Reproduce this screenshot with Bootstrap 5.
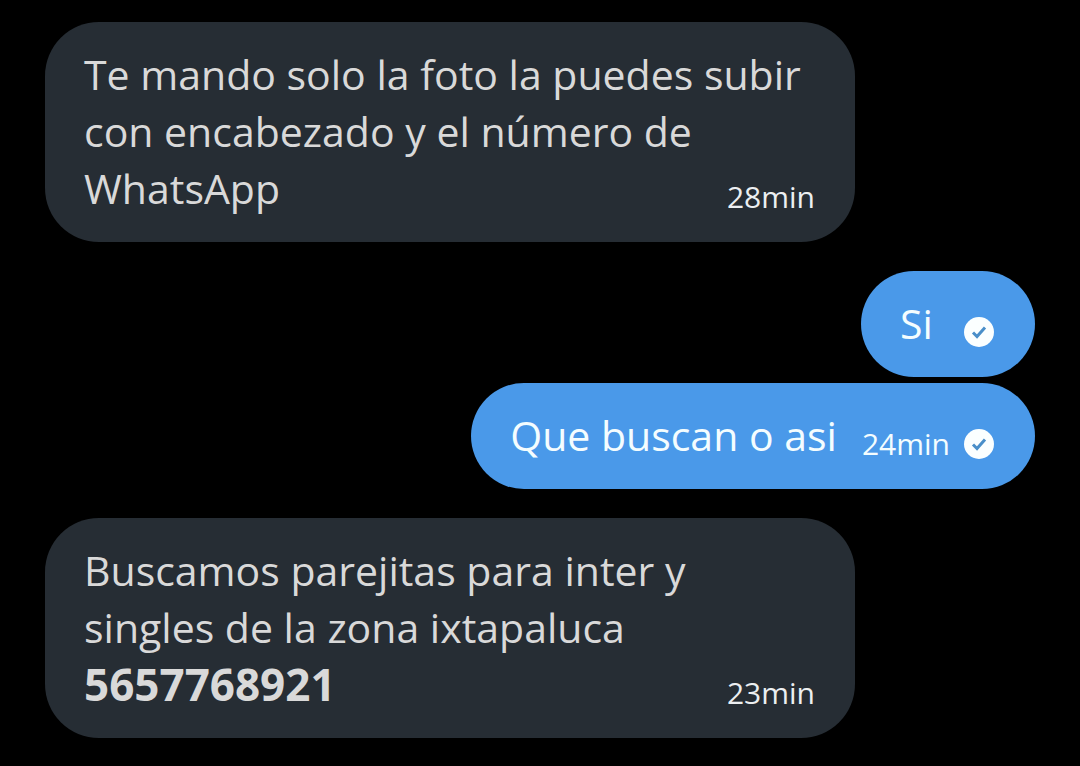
<!DOCTYPE html>
<html lang="es">
<head>
<meta charset="utf-8">
<meta name="viewport" content="width=device-width, initial-scale=1">
<title>Chat</title>
<link href="https://cdn.jsdelivr.net/npm/bootstrap@5.3.0/dist/css/bootstrap.min.css" rel="stylesheet">
<style>
body { background: #000; font-family: "Open Sans", sans-serif; }
.chat { padding: 22px 45px 24px; gap: 29px; }
.sent { gap: 6px; }
.bubble { border-radius: 54px; padding: 24px 40px 25px 39px; font-size: 41px; line-height: 57px; }
.bubble-in { background: #262d34; color: #d9d9d9; max-width: 810px; }
.bubble-out { background: #4a99e9; color: #f4fdff; gap: 25px; min-width: 174px; padding-right: 41px; }
.phone { font-size: 44px; }
.stamp { font-size: 30px; line-height: 40px; min-height: 40px; }
.bubble-in .stamp { color: #eceff1; }
.meta { gap: 14px; }
.tick { width: 30px; height: 30px; }
</style>
</head>
<body>
<main class="chat d-flex flex-column">
  <article class="bubble bubble-in">
    Te mando solo la foto la puedes subir con encabezado y el número de
    <div class="d-flex justify-content-between align-items-end"><span>WhatsApp</span><time class="stamp">28min</time></div>
  </article>
  <section class="sent d-flex flex-column align-items-end">
    <article class="bubble bubble-out d-flex justify-content-between align-items-end">
      <span>Si</span>
      <span class="meta d-flex align-items-center stamp">
        <svg class="tick" viewBox="0 0 30 30" role="img" aria-label="Enviado"><circle cx="15" cy="15" r="15" fill="#fbffff"/><path d="M9 15.500l4 4 8-9" fill="none" stroke="#4a8fc9" stroke-width="3"/></svg>
      </span>
    </article>
    <article class="bubble bubble-out d-flex justify-content-between align-items-end">
      <span>Que buscan o asi</span>
      <span class="meta d-flex align-items-center stamp">
        <time>24min</time>
        <svg class="tick" viewBox="0 0 30 30" role="img" aria-label="Enviado"><circle cx="15" cy="15" r="15" fill="#fbffff"/><path d="M9 15.500l4 4 8-9" fill="none" stroke="#4a8fc9" stroke-width="3"/></svg>
      </span>
    </article>
  </section>
  <article class="bubble bubble-in">
    Buscamos parejitas para inter y singles de la zona ixtapaluca
    <div class="d-flex justify-content-between align-items-end"><strong class="phone">5657768921</strong><time class="stamp">23min</time></div>
  </article>
</main>
<script src="https://cdn.jsdelivr.net/npm/bootstrap@5.3.0/dist/js/bootstrap.bundle.min.js"></script>
</body>
</html>
